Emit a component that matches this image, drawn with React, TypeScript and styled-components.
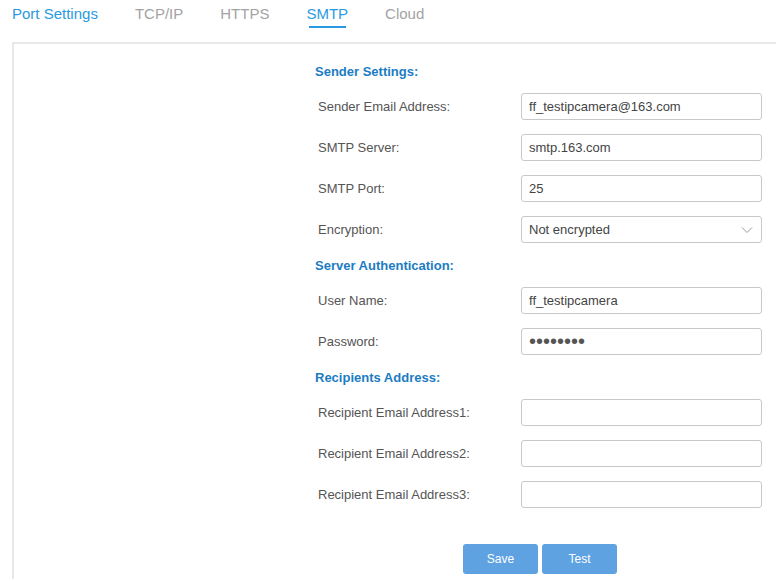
import React from 'react';
import styled, { createGlobalStyle } from 'styled-components';

const GlobalStyle = createGlobalStyle`
  body {
    margin: 0;
    background: #fff;
    font-family: "Liberation Sans", Arial, sans-serif;
  }
`;

const tabs = ['Port Settings', 'TCP/IP', 'HTTPS', 'SMTP', 'Cloud'];

const senderRows = [
  { label: 'Sender Email Address:', value: 'ff_testipcamera@163.com' },
  { label: 'SMTP Server:', value: 'smtp.163.com' },
  { label: 'SMTP Port:', value: '25' },
];

const recipientRows = ['Recipient Email Address1:', 'Recipient Email Address2:', 'Recipient Email Address3:'];

const App: React.FC = () => {
  return (
    <Page>
      <GlobalStyle />
      <TabBar>
        {tabs.map(t => (
          <Tab key={t} $active={t === 'SMTP'} $blue={t === 'Port Settings' || t === 'SMTP'}>
            {t}
          </Tab>
        ))}
      </TabBar>
      <Panel>
        <Form>
          <SectionTitle>Sender Settings:</SectionTitle>
          <Rows>
            {senderRows.map(r => (
              <Row key={r.label}>
                <Label>{r.label}</Label>
                <Field value={r.value} readOnly />
              </Row>
            ))}
            <Row>
              <Label>Encryption:</Label>
              <SelectBox>
                <span>Not encrypted</span>
                <svg width="12" height="8" viewBox="0 0 12 8">
                  <path d="M1 1.5 L6 6.5 L11 1.5" fill="none" stroke="#999" strokeWidth="1" />
                </svg>
              </SelectBox>
            </Row>
          </Rows>

          <SectionTitle $spaced>Server Authentication:</SectionTitle>
          <Rows>
            <Row>
              <Label>User Name:</Label>
              <Field value="ff_testipcamera" readOnly />
            </Row>
            <Row>
              <Label>Password:</Label>
              <Field type="password" value="12345678" readOnly $password />
            </Row>
          </Rows>

          <SectionTitle $spaced>Recipients Address:</SectionTitle>
          <Rows>
            {recipientRows.map(l => (
              <Row key={l}>
                <Label>{l}</Label>
                <Field value="" readOnly />
              </Row>
            ))}
          </Rows>

          <Buttons>
            <Button>Save</Button>
            <Button>Test</Button>
          </Buttons>
        </Form>
      </Panel>
    </Page>
  );
};

const Page = styled.div`
  width: 776px;
  height: 581px;
  overflow: hidden;
`;

const TabBar = styled.div`
  display: flex;
  gap: 37px;
  height: 42px;
  padding-left: 12px;
  box-sizing: border-box;
`;

const Tab = styled.div<{ $active?: boolean; $blue?: boolean }>`
  position: relative;
  padding-top: 4px;
  font-size: 15px;
  line-height: 20px;
  height: 23px;
  color: ${p => (p.$blue ? '#2a9ae0' : '#a3a3a3')};
  cursor: pointer;
  &::after {
    content: '';
    display: ${p => (p.$active ? 'block' : 'none')};
    position: absolute;
    left: 3px;
    right: 2px;
    bottom: -1px;
    height: 2px;
    background: #2a9ae0;
  }
`;

const Panel = styled.div`
  margin-left: 12px;
  border-top: 2px solid #e8e8e8;
  border-left: 2px solid #e8e8e8;
  height: 535px;
`;

const Form = styled.div`
  width: 448px;
  margin-left: 301px;
  padding-top: 18px;
`;

const SectionTitle = styled.div<{ $spaced?: boolean }>`
  font-size: 13px;
  font-weight: bold;
  line-height: 20px;
  color: #1b7cc3;
  margin-top: ${p => (p.$spaced ? '13px' : '0')};
  margin-bottom: 11px;
`;

const Rows = styled.div`
  display: flex;
  flex-direction: column;
  gap: 14px;
`;

const Row = styled.div`
  display: flex;
  align-items: center;
  height: 27px;
`;

const Label = styled.div`
  width: 206px;
  padding-left: 3px;
  box-sizing: border-box;
  font-size: 13px;
  color: #555;
`;

const Field = styled.input<{ $password?: boolean }>`
  width: 241px;
  height: 27px;
  box-sizing: border-box;
  border: 1px solid #c8c8c8;
  border-radius: 3px;
  padding: 0 7px;
  font-family: "Liberation Sans", Arial, sans-serif;
  font-size: ${p => (p.$password ? '20px' : '13px')};
  color: ${p => (p.$password ? '#555' : '#444')};
  outline: none;
`;

const SelectBox = styled.div`
  width: 241px;
  height: 27px;
  box-sizing: border-box;
  border: 1px solid #c8c8c8;
  border-radius: 3px;
  padding: 0 8px 0 7px;
  display: flex;
  align-items: center;
  justify-content: space-between;
  font-size: 13px;
  color: #444;
`;

const Buttons = styled.div`
  display: flex;
  justify-content: center;
  gap: 4px;
  margin-top: 36px;
  padding-left: 2px;
`;

const Button = styled.button`
  width: 75px;
  height: 30px;
  border: none;
  border-radius: 3px;
  background: #5ea2e2;
  color: #fff;
  font-family: "Liberation Sans", Arial, sans-serif;
  font-size: 12px;
  cursor: pointer;
`;

export default App;
